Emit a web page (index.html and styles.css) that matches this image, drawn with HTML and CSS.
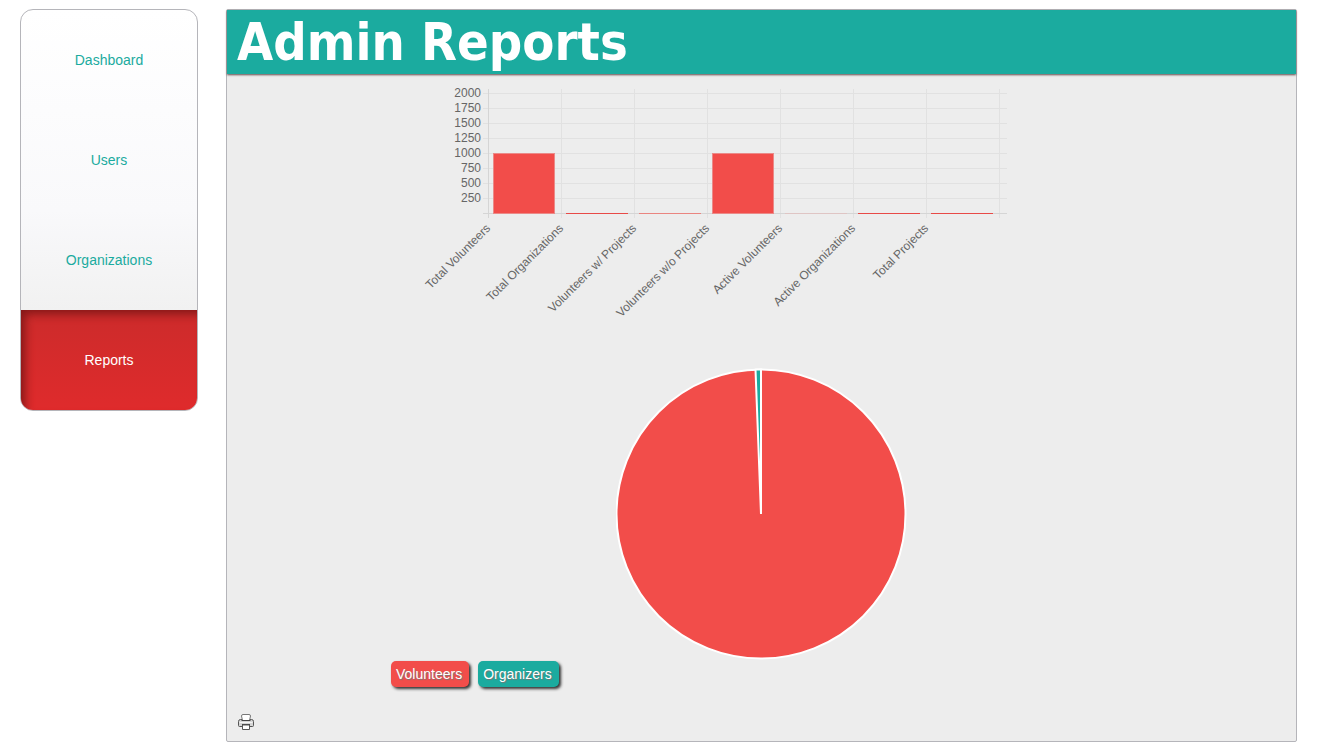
FILE: index.html
```html
<!DOCTYPE html>
<html lang="en">
<head>
<meta charset="utf-8">
<title>Admin Reports</title>
<link rel="stylesheet" href="styles.css">
</head>
<body>
<div class="page">
  <nav class="sidebar" aria-label="Admin">
    <a class="nav-link" href="#dashboard">Dashboard</a>
    <a class="nav-link" href="#users">Users</a>
    <a class="nav-link" href="#organizations">Organizations</a>
    <a class="nav-link active" href="#reports" aria-current="page">Reports</a>
  </nav>
  <main class="panel">
    <h1 class="panel-title">Admin Reports</h1>
    <div class="report">
      <svg class="bar-chart" viewBox="0 0 741 250" role="img" aria-label="Volunteer and organization totals">
        <path class="grid" d="M92 8.5H616M92 23.5H616M92 38.5H616M92 53.5H616M92 68.5H616M92 83.5H616M92 98.5H616M92 113.5H616M170.500 4V133M243.500 4V133M316.500 4V133M389.500 4V133M462.500 4V133M535.500 4V133M608.500 4V133"/>
        <path class="axis" d="M92 128.500H616M97.500 4V133"/>
        <g class="bars">
          <rect x="102.500" y="68.500" width="61" height="60"/>
          <rect x="321.500" y="68.500" width="61" height="60"/>
        </g>
        <path class="flat-bar" d="M175 128.500H237M467 128.500H529M540 128.500H602"/>
        <path class="thin-bar" d="M248 128.500H310"/>
        <path class="empty-bar" d="M394 128.500H456"/>
        <g class="scale">
          <text x="90" y="12">2000</text>
          <text x="90" y="27">1750</text>
          <text x="90" y="42">1500</text>
          <text x="90" y="57">1250</text>
          <text x="90" y="72">1000</text>
          <text x="90" y="87">750</text>
          <text x="90" y="102">500</text>
          <text x="90" y="117">250</text>
        </g>
        <g class="scale">
          <text transform="translate(100 144) rotate(-45)">Total Volunteers</text>
          <text transform="translate(173 144) rotate(-45)">Total Organizations</text>
          <text transform="translate(246 144) rotate(-45)">Volunteers w/ Projects</text>
          <text transform="translate(319 144) rotate(-45)">Volunteers w/o Projects</text>
          <text transform="translate(392 144) rotate(-45)">Active Volunteers</text>
          <text transform="translate(465 144) rotate(-45)">Active Organizations</text>
          <text transform="translate(538 144) rotate(-45)">Total Projects</text>
        </g>
      </svg>
      <svg class="pie-chart" viewBox="0 0 292 292" role="img" aria-label="Volunteers compared with organizers">
        <circle class="pie-volunteers" cx="145" cy="146" r="144.500"/>
        <path class="pie-organizers" d="M145 146L139.500 1.600A144.500 144.500 0 0 1 145 1.500Z"/>
      </svg>
      <div class="legend">
        <span class="tag volunteers">Volunteers</span>
        <span class="tag organizers">Organizers</span>
      </div>
    </div>
    <button class="print" type="button" aria-label="Print">
      <svg class="print-icon" viewBox="0 0 16 16">
        <path d="M2.500 5.500h11q2 0 2 2v4q0 1-1 1h-13q-1 0-1-1v-4q0-2 2-2Z" fill="#d5d5d5" stroke="#555"/>
        <path d="M4.500 6.500L3.500 2Q3.500.500 5 .500h6q1.500 0 1.500 1.500L11.500 6.500Z" fill="#fff" stroke="#777"/>
        <path d="M3.500 6.500h9" stroke="#444"/>
        <path d="M1.500 8.500h13" stroke="#f5f5f5"/>
        <path d="M4 10.500h8" stroke="#444"/>
        <path d="M4.500 11v4.500h7V11Z" fill="#fff" stroke="#555"/>
      </svg>
    </button>
  </main>
</div>
</body>
</html>
```

FILE: styles.css
```css
* {
  box-sizing: border-box;
}

body {
  margin: 0;
  background: #fff;
  font: 14px/20px Arial, "Liberation Sans", sans-serif;
}

.page {
  display: flex;
  align-items: flex-start;
  gap: 28px;
  padding: 9px 26px 13px 20px;
}

.sidebar {
  flex: none;
  width: 178px;
  overflow: hidden;
  border: 1px solid #b5b5ba;
  border-radius: 13px;
  background: linear-gradient(#fff, #f9f9fb 50%, #f1f1f1 75%);
}

.nav-link {
  display: flex;
  align-items: center;
  justify-content: center;
  height: 100px;
  color: #1bab9f;
  text-decoration: none;
}

.nav-link.active {
  color: #fff;
  background: linear-gradient(#cc2b2b, #df2b2c);
  box-shadow: inset 6px 6px 10px -2px #841818;
}

.panel {
  flex: 1;
  min-width: 0;
  border: 1px solid #b5b5ba;
  border-radius: 2px;
  background: #ededed;
}

.panel-title {
  margin: 0;
  padding: 0 10px;
  background: #1bab9f;
  box-shadow: 0 1px 2px #604848;
  color: #fff;
  font: bold 52px/64px Tahoma, "DejaVu Sans Condensed", "Noto Sans", sans-serif;
}

.report {
  display: flex;
  flex-direction: column;
  max-width: 741px;
  margin: 11px auto 0;
}

.bar-chart {
  display: block;
  width: 100%;
}

.grid {
  stroke: #e1e1e1;
}

.axis {
  stroke: #d5d5d5;
}

.bars {
  fill: #f24d4a;
  stroke: #eb8a88;
}

.flat-bar {
  stroke: #e84a47;
}

.thin-bar {
  stroke: #ea8580;
}

.empty-bar {
  stroke: #dfc5c4;
}

.scale {
  fill: #666;
  font-size: 12px;
  text-anchor: end;
}

.pie-chart {
  align-self: center;
  width: 292px;
  margin-top: 33px;
}

.pie-volunteers,
.pie-organizers {
  fill: #f24d4a;
  stroke: #fff;
  stroke-width: 2;
}

.pie-organizers {
  fill: #1bab9f;
}

.legend {
  display: flex;
  gap: 9px;
  margin-top: 1px;
}

.tag {
  padding: 3px 7px 3px 5px;
  border-radius: 5px;
  box-shadow: 2px 2px 3px #333;
  color: #fff;
  text-shadow: 1px 1px 1px #777;
}

.volunteers {
  background: #f24d4a;
}

.organizers {
  background: #1bab9f;
}

.print {
  display: block;
  margin: 27px 11px 11px;
  padding: 0;
  border: 0;
  background: none;
}

.print-icon {
  display: block;
  width: 16px;
  height: 16px;
  fill: none;
}
```
